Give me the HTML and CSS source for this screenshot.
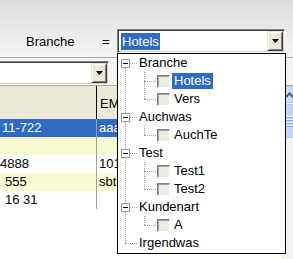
FILE: index.html
```html
<!DOCTYPE html>
<html lang="de">
<head>
    <meta charset="UTF-8">
    <title>Filter</title>
    <link rel="stylesheet" href="styles.css">
</head>
<body>
    <div class="window">
        <div class="toolbar">
            <div class="toolbar-row">
                <span class="lbl">Branche</span>
                <span class="eq">=</span>
                <div class="combo combo-main">
                    <div class="combo-value"><span class="sel">Hotels</span></div>
                    <div class="drop-btn"><svg width="7" height="4" viewBox="0 0 7 4"><path d="M0 0h7L3.5 4z" fill="#000"/></svg></div>
                </div>
            </div>
        </div>

        <div class="filter">
            <div class="combo combo-small">
                <div class="combo-value"></div>
                <div class="drop-btn"><svg width="7" height="4" viewBox="0 0 7 4"><path d="M0 0h7L3.5 4z" fill="#000"/></svg></div>
            </div>
        </div>

        <div class="grid">
            <div class="grid-main">
                <div class="grid-head">
                    <div class="hc1"></div>
                    <div class="hc2">EM</div>
                </div>
                <div class="row selected"><div class="c1 o2">11-722</div><div class="c2">aaa</div></div>
                <div class="row alt"><div class="c1"></div><div class="c2"></div></div>
                <div class="row"><div class="c1 o0">4888</div><div class="c2">101</div></div>
                <div class="row alt"><div class="c1 o5">555</div><div class="c2">sbt</div></div>
                <div class="row"><div class="c1 o5">16 31</div><div class="c2"></div></div>
            </div>
            <div class="vscroll">
                <div class="sb-btn"><svg width="9" height="6" viewBox="0 0 9 6"><path d="M1 5l3.5-3.5L8 5" fill="none" stroke="#4d6185" stroke-width="2"/></svg></div>
                <div class="sb-thumb">
                    <span class="grip"></span><span class="grip"></span><span class="grip"></span><span class="grip"></span>
                </div>
            </div>
        </div>

        <!-- dropdown of the Branche combo -->
        <div class="popup">
            <ul class="tree">
                <li>
                    <div class="node"><span class="exp"></span><span class="txt">Branche</span></div>
                    <ul class="kids">
                        <li class="node"><span class="chk"></span><span class="txt sel">Hotels</span></li>
                        <li class="node"><span class="chk"></span><span class="txt">Vers</span></li>
                    </ul>
                </li>
                <li>
                    <div class="node"><span class="exp"></span><span class="txt">Auchwas</span></div>
                    <ul class="kids">
                        <li class="node"><span class="chk"></span><span class="txt">AuchTe</span></li>
                    </ul>
                </li>
                <li>
                    <div class="node"><span class="exp"></span><span class="txt">Test</span></div>
                    <ul class="kids">
                        <li class="node"><span class="chk"></span><span class="txt">Test1</span></li>
                        <li class="node"><span class="chk"></span><span class="txt">Test2</span></li>
                    </ul>
                </li>
                <li>
                    <div class="node"><span class="exp"></span><span class="txt">Kundenart</span></div>
                    <ul class="kids">
                        <li class="node"><span class="chk"></span><span class="txt">A</span></li>
                    </ul>
                </li>
                <li>
                    <div class="node"><span class="txt">Irgendwas</span></div>
                </li>
            </ul>
        </div>
    </div>
</body>
</html>
```

FILE: styles.css
```css
body {
    margin: 0;
    width: 293px;
    height: 259px;
    overflow: hidden;
    font-family: "Liberation Sans", Arial, sans-serif;
    font-size: 13px;
    color: #000;
    background: #fff;
}
.window {
    position: relative;
    width: 298px;
    height: 259px;
    display: flex;
    flex-direction: column;
}

/* top bar */
.toolbar {
    height: 58px;
    box-sizing: border-box;
    padding-top: 29px;
    border-bottom: 1px solid #a9a9a9;
    background: linear-gradient(#dcdcdc, #f6f6f6);
}
.toolbar-row {
    display: flex;
    align-items: center;
    height: 24px;
}
.lbl {
    margin-left: 26px;
    width: 76px;
}
.eq {
    width: 15px;
}

/* combo boxes */
.combo {
    display: flex;
    height: 24px;
    box-sizing: border-box;
    padding: 1px;
    border: 1px solid;
    border-color: #808080 #fff #fff #808080;
    box-shadow: inset 1px 1px #404040, inset -1px -1px #d4d0c8;
    background: #fff;
}
.combo-main {
    width: 168px;
}
.combo-value {
    flex: 1;
    display: flex;
    align-items: center;
}
.combo-value .sel {
    margin-left: 2px;
    padding: 0 1px;
    line-height: 17px;
    background: #316ac5;
    color: #fff;
}
.drop-btn {
    width: 16px;
    box-sizing: border-box;
    display: flex;
    align-items: center;
    justify-content: center;
    border: 1px solid;
    border-color: #ece9d8 #404040 #404040 #ece9d8;
    box-shadow: inset 1px 1px #fff, inset -1px -1px #808080;
    background: #ece9d8;
}

.filter {
    height: 27px;
    box-sizing: border-box;
    padding-top: 3px;
    background: #f4f4f4;
}
.combo-small {
    width: 119px;
    margin-left: -10px;
}

/* grid */
.grid {
    flex: 1;
    display: flex;
    border-top: 1px solid #aca899;
    background: #fff;
}
.grid-main {
    flex: 1;
}
.grid-head {
    height: 33px;
    display: flex;
    background: #ece9d8;
}
.hc1 {
    width: 96px;
}
.hc2 {
    flex: 1;
    padding-left: 3px;
    line-height: 36px;
    border-left: 1px solid #000;
}
.row {
    height: 18px;
    line-height: 18px;
    display: flex;
    white-space: nowrap;
}
.row .c1 {
    width: 96px;
    padding-left: 2px;
    box-sizing: border-box;
}
.row .c2 {
    flex: 1;
    padding-left: 2px;
    border-left: 1px solid #a0a0a0;
}
.row .o0 { padding-left: 0; }
.row .o2 { padding-left: 2px; }
.row .o5 { padding-left: 5px; }
.row.alt {
    background: #fafad2;
}
.row.selected {
    background: #316ac5;
    color: #fff;
}

/* scrollbar */
.vscroll {
    width: 17px;
    background: #f4f3ee;
}
.sb-btn {
    height: 17px;
    box-sizing: border-box;
    display: flex;
    align-items: center;
    justify-content: center;
    border: 1px solid #b4c8f6;
    border-radius: 2px;
    background: linear-gradient(90deg, #dbe5fd, #bccefa);
}
.sb-thumb {
    height: 34px;
    margin-top: 1px;
    box-sizing: border-box;
    display: flex;
    flex-direction: column;
    align-items: center;
    justify-content: center;
    gap: 1px;
    border: 1px solid #b4c8f6;
    border-radius: 2px;
    background: linear-gradient(90deg, #d2defc, #b9cbf8);
}
.grip {
    width: 7px;
    height: 1px;
    border-bottom: 1px solid #8daaf0;
    background: #eef3fe;
}

/* dropdown tree */
.popup {
    position: absolute;
    left: 117px;
    top: 53px;
    width: 169px;
    height: 201px;
    box-sizing: border-box;
    border: 1px solid #000;
    background: #fff;
}
.tree,
.kids {
    list-style: none;
    margin: 0;
    padding: 0;
    position: relative;
}
.tree::before {
    content: "";
    position: absolute;
    left: 7px;
    top: 9px;
    height: 180px;
    border-left: 1px dotted #a0a0a0;
}
.kids::before {
    content: "";
    position: absolute;
    left: 26px;
    top: 0;
    bottom: 9px;
    border-left: 1px dotted #a0a0a0;
}
.node {
    position: relative;
    height: 18px;
}
.node::before {
    content: "";
    position: absolute;
    left: 7px;
    top: 9px;
    width: 12px;
    border-top: 1px dotted #a0a0a0;
}
.kids .node::before {
    left: 26px;
}
.exp {
    position: absolute;
    left: 3px;
    top: 5px;
    width: 9px;
    height: 9px;
    box-sizing: border-box;
    border: 1px solid #919b9c;
    background: #fff;
}
.exp::after {
    content: "";
    position: absolute;
    left: 1px;
    top: 3px;
    width: 5px;
    height: 1px;
    background: #000;
}
.chk {
    position: absolute;
    left: 39px;
    top: 3px;
    width: 13px;
    height: 13px;
    box-sizing: border-box;
    border: 1px solid;
    border-color: #808080 #fff #fff #808080;
    box-shadow: inset 1px 1px #a0a0a0;
    background: #ecebe4;
}
.txt {
    position: absolute;
    left: 19px;
    top: 1px;
    height: 16px;
    line-height: 16px;
    padding: 0 2px;
    white-space: nowrap;
}
.kids .txt {
    left: 54px;
}
.txt.sel {
    background: #316ac5;
    color: #fff;
}
```
